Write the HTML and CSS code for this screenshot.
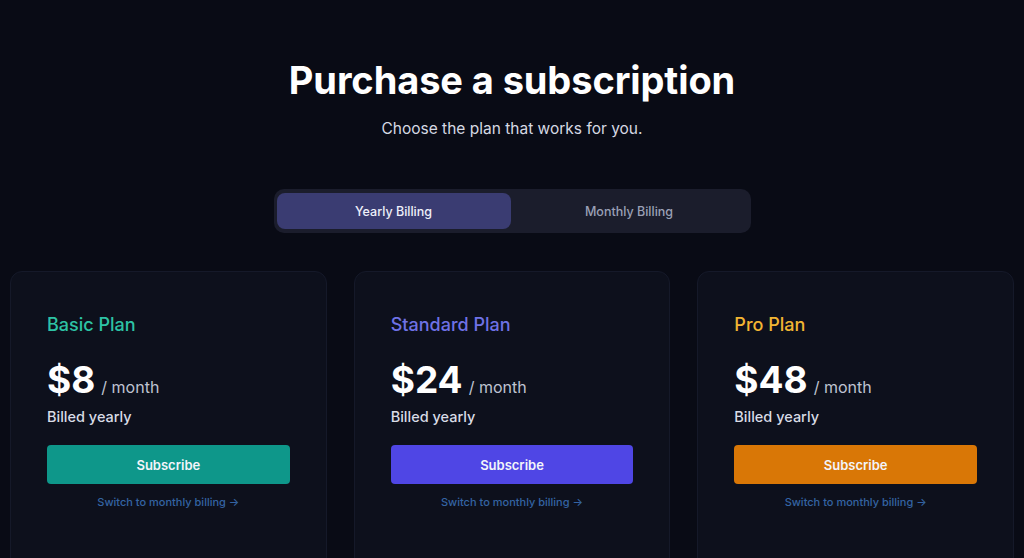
FILE: index.html
```html
<!DOCTYPE html>
<html lang="en">
<head>
<meta charset="utf-8">
<title>Purchase a subscription</title>
<link rel="stylesheet" href="styles.css">
</head>
<body>
<main class="page">
  <header class="hero">
    <h1 class="title">Purchase a subscription</h1>
    <p class="subtitle">Choose the plan that works for you.</p>
  </header>
  <div class="toggle">
    <button class="toggle-btn active">Yearly Billing</button>
    <button class="toggle-btn">Monthly Billing</button>
  </div>
  <section class="plans">
    <article class="card">
      <h2 class="plan-name basic">Basic Plan</h2>
      <div class="price"><span class="amount">$8</span><span class="per">/ month</span></div>
      <p class="billed">Billed yearly</p>
      <button class="subscribe basic-bg">Subscribe</button>
      <a class="switch" href="#">Switch to monthly billing &rarr;</a>
    </article>
    <article class="card">
      <h2 class="plan-name standard">Standard Plan</h2>
      <div class="price"><span class="amount">$24</span><span class="per">/ month</span></div>
      <p class="billed">Billed yearly</p>
      <button class="subscribe standard-bg">Subscribe</button>
      <a class="switch" href="#">Switch to monthly billing &rarr;</a>
    </article>
    <article class="card">
      <h2 class="plan-name pro">Pro Plan</h2>
      <div class="price"><span class="amount">$48</span><span class="per">/ month</span></div>
      <p class="billed">Billed yearly</p>
      <button class="subscribe pro-bg">Subscribe</button>
      <a class="switch" href="#">Switch to monthly billing &rarr;</a>
    </article>
  </section>
</main>
</body>
</html>
```

FILE: styles.css
```css
* { box-sizing: border-box; }
html, body {
  margin: 0;
  padding: 0;
  background: #090b15;
  height: 100%;
  overflow: hidden;
}
body {
  font-family: "Inter", "Noto Sans", sans-serif;
  color: #ffffff;
}
.page {
  padding: 0 10px;
  display: flex;
  flex-direction: column;
  align-items: center;
}
.hero {
  text-align: center;
  padding-top: 56px;
}
.title {
  margin: 0;
  font-size: 38px;
  font-weight: 700;
  letter-spacing: -0.1px;
  line-height: 48px;
  color: #ffffff;
}
.subtitle {
  margin: 14px 0 0;
  font-size: 15.5px;
  line-height: 22px;
  color: #d6d9e3;
}
.toggle {
  margin-top: 49px;
  width: 477px;
  height: 44px;
  padding: 4px 3px;
  background: #1b1d2c;
  border-radius: 10px;
  display: flex;
}
.toggle-btn {
  flex: 1;
  border: none;
  background: transparent;
  font-family: inherit;
  font-size: 12.5px;
  font-weight: 500;
  color: #9aa0b6;
  border-radius: 8px;
  cursor: pointer;
}
.toggle-btn.active {
  flex: 0 0 234px;
  background: #3a3c72;
  color: #eef0fa;
}
.plans {
  margin-top: 38px;
  width: 100%;
  display: grid;
  grid-template-columns: repeat(3, 1fr);
  gap: 27px;
}
.card {
  background: #0d101c;
  border: 1px solid #151929;
  border-radius: 12px;
  padding: 41px 36px 60px;
  display: flex;
  flex-direction: column;
}
.card > * { flex-shrink: 0; }
.plan-name {
  margin: 0;
  font-size: 18px;
  font-weight: 500;
  line-height: 24px;
}
.basic { color: #2dc3a5; }
.standard { color: #6f72e6; }
.pro { color: #f2b533; }
.price {
  margin-top: 21px;
  display: flex;
  align-items: baseline;
  gap: 6px;
}
.amount {
  font-size: 37px;
  font-weight: 700;
  line-height: 44px;
  color: #ffffff;
}
.per {
  font-size: 16px;
  color: #bfc3d1;
}
.billed {
  margin: 5px 0 0;
  font-size: 14.5px;
  line-height: 20px;
  font-weight: 500;
  color: #d9dce6;
}
.subscribe {
  margin-top: 18px;
  height: 39px;
  width: 100%;
  border: none;
  border-radius: 4px;
  font-family: inherit;
  font-size: 13px;
  font-weight: 600;
  color: #f3f5fa;
  cursor: pointer;
}
.basic-bg { background: #0e978a; }
.standard-bg { background: #4f46e5; }
.pro-bg { background: #d97706; }
.switch {
  margin-top: 11px;
  text-align: center;
  font-size: 11px;
  font-weight: 500;
  color: #3464a3;
  text-decoration: none;
}
```
